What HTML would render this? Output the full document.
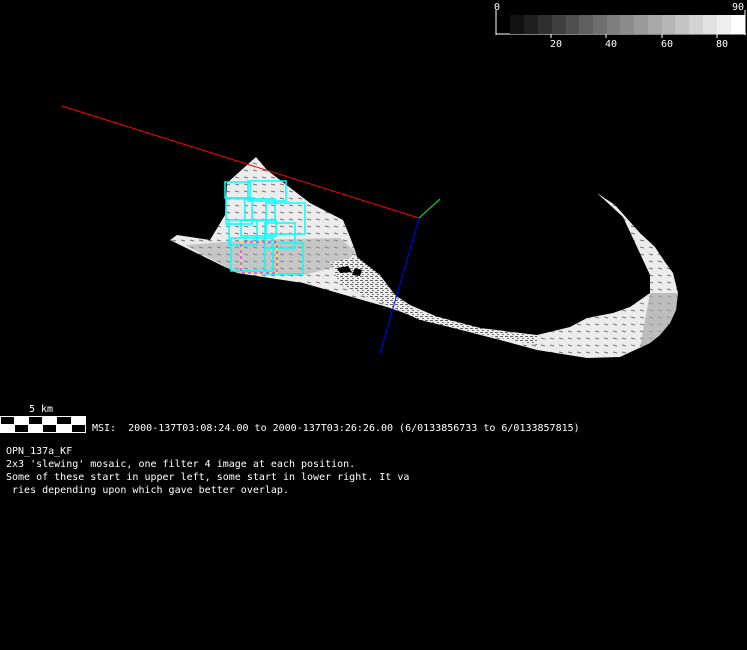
<!DOCTYPE html>
<html><head><style>
body{margin:0;background:#000;width:747px;height:650px;overflow:hidden;position:relative;font-family:"DejaVu Sans Mono","Liberation Mono",monospace;color:#fff}
.t{position:absolute;font-size:10px;line-height:13px;white-space:pre}
</style></head><body>
<svg width="747" height="650" style="position:absolute;left:0;top:0">
 <defs>
  <pattern id="tx" width="9" height="7" patternUnits="userSpaceOnUse">
   <rect width="9" height="7" fill="#ececec"/>
   <line x1="1" y1="2" x2="5" y2="3" stroke="#777" stroke-width="1"/>
  </pattern>
  <pattern id="tx2" width="5" height="4" patternUnits="userSpaceOnUse">
   <rect width="5" height="4" fill="#eee"/>
   <rect x="0" y="0" width="3" height="1" fill="#666"/>
   <rect x="2" y="2" width="2" height="1" fill="#777"/>
  </pattern>
 </defs>
 <line x1="496" y1="10" x2="496" y2="35" stroke="#fff"/>
 <line x1="745" y1="10" x2="745" y2="35" stroke="#fff"/>
 <line x1="496" y1="34" x2="746" y2="34" stroke="#fff"/>
 <g>
  <rect x="510" y="15" width="14" height="19" fill="#111"/>
  <rect x="524" y="15" width="14" height="19" fill="#1f1f1f"/>
  <rect x="538" y="15" width="14" height="19" fill="#2f2f2f"/>
  <rect x="552" y="15" width="14" height="19" fill="#3f3f3f"/>
  <rect x="566" y="15" width="13" height="19" fill="#4f4f4f"/>
  <rect x="579" y="15" width="14" height="19" fill="#5f5f5f"/>
  <rect x="593" y="15" width="14" height="19" fill="#6f6f6f"/>
  <rect x="607" y="15" width="13" height="19" fill="#7f7f7f"/>
  <rect x="620" y="15" width="14" height="19" fill="#8c8c8c"/>
  <rect x="634" y="15" width="14" height="19" fill="#9a9a9a"/>
  <rect x="648" y="15" width="14" height="19" fill="#a8a8a8"/>
  <rect x="662" y="15" width="13" height="19" fill="#b6b6b6"/>
  <rect x="675" y="15" width="14" height="19" fill="#c5c5c5"/>
  <rect x="689" y="15" width="14" height="19" fill="#d3d3d3"/>
  <rect x="703" y="15" width="14" height="19" fill="#e1e1e1"/>
  <rect x="717" y="15" width="14" height="19" fill="#efefef"/>
  <rect x="731" y="15" width="14" height="19" fill="#fff"/>
 </g>
 <g stroke="#fff"><line x1="551" y1="34" x2="551" y2="38"/><line x1="606" y1="34" x2="606" y2="38"/><line x1="662" y1="34" x2="662" y2="38"/><line x1="717" y1="34" x2="717" y2="38"/></g>
 <polygon fill="url(#tx)" points="170,240 177,235 210,240 225,215 227,183 247,165 256,157 267,170 310,203 343,220 350,237 355,250 357,257 343,265 370,278 390,292 410,305 440,318 480,328 537,335 570,327 587,318 613,313 630,307 650,293 650,275 637,247 623,217 597,193 615,205 640,233 655,247 665,262 673,273 678,293 676,310 670,323 660,335 650,343 620,357 587,358 537,350 500,340 430,322 387,307 303,283 237,273"/>
 <polygon fill="#999" opacity="0.45" points="185,245 250,240 340,238 356,252 343,265 300,276 237,273"/>
 <polygon fill="url(#tx2)" points="330,262 357,257 380,275 395,295 420,312 480,328 537,336 537,345 480,334 420,320 380,302 340,285"/>
 <polygon fill="#aaa" opacity="0.7" points="650,293 678,293 676,310 670,323 660,335 650,343 640,348 645,320"/>
 <polygon fill="#000" points="337,268 348,266 352,272 340,273"/>
 <polygon fill="#000" points="355,268 362,270 360,276 352,275"/>
 <g fill="none" stroke="#0ff" stroke-width="1.5">
  <rect x="225" y="182" width="25" height="16"/><rect x="248" y="181" width="38" height="20"/>
  <rect x="226" y="198" width="26" height="26"/><rect x="245" y="199" width="30" height="21"/>
  <rect x="266" y="203" width="39" height="31"/><rect x="229" y="220" width="28" height="25"/>
  <rect x="241" y="220" width="35" height="16"/><rect x="265" y="223" width="30" height="25"/>
  <rect x="231" y="238" width="42" height="33"/><rect x="265" y="243" width="38" height="31"/>
 </g>
 <rect x="241" y="242" width="36" height="31" fill="none" stroke="#ff0" stroke-dasharray="3,3"/>
 <rect x="241" y="242" width="36" height="31" fill="none" stroke="#f0f" stroke-dasharray="3,3" stroke-dashoffset="3"/>
 <line x1="62" y1="106" x2="419" y2="218" stroke="#f00"/>
 <line x1="419" y1="218" x2="440" y2="199" stroke="#0f0"/>
 <line x1="419" y1="218" x2="380" y2="353" stroke="#00f"/>
 <rect x="0" y="416" width="86" height="17" fill="#fff"/>
 <g fill="#000"><rect x="1" y="417" width="13" height="7"/><rect x="29" y="417" width="13" height="7"/><rect x="57" y="417" width="14" height="7"/>
 <rect x="15" y="425" width="13" height="7"/><rect x="43" y="425" width="13" height="7"/><rect x="72" y="425" width="13" height="7"/></g>
</svg>
<div class="t" style="left:29px;top:403px">5 km</div>
<div class="t" style="left:92px;top:422px">MSI:  2000-137T03:08:24.00 to 2000-137T03:26:26.00 (6/0133856733 to 6/0133857815)</div>
<div class="t" style="left:6px;top:445px">OPN_137a_KF
2x3 'slewing' mosaic, one filter 4 image at each position.
Some of these start in upper left, some start in lower right. It va
 ries depending upon which gave better overlap.</div>
<div class="t" style="left:494px;top:1px">0</div>
<div class="t" style="left:732px;top:1px">90</div>
<div class="t" style="left:550px;top:38px">20</div>
<div class="t" style="left:605px;top:38px">40</div>
<div class="t" style="left:661px;top:38px">60</div>
<div class="t" style="left:716px;top:38px">80</div>
</body></html>
